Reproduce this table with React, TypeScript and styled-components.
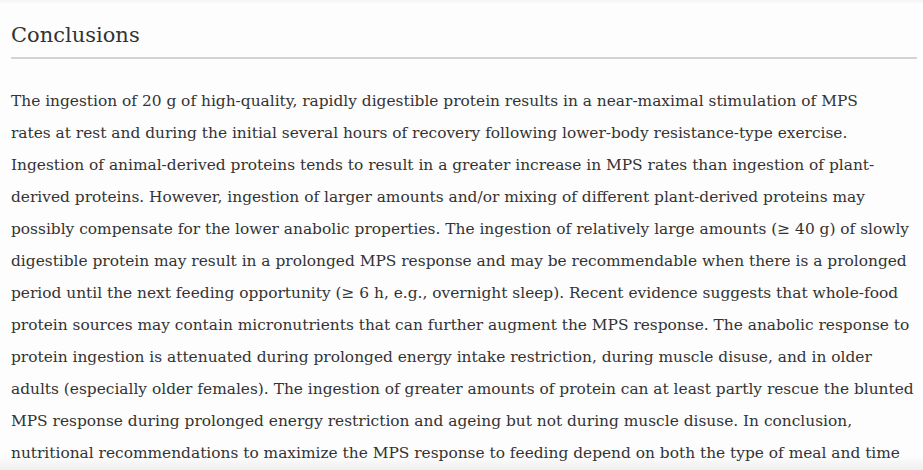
import React from "react";
import styled, { createGlobalStyle } from "styled-components";

const Global = createGlobalStyle`
  html, body { margin: 0; padding: 0; background: #fdfdfd; }
  body { font-family: "DejaVu Serif", Georgia, serif; color: #333; }
`;

const Page = styled.main`
  position: relative;
  height: 470px;
  overflow: hidden;
  padding: 0 6px 0 11px;
  box-sizing: border-box;
`;

const TopFade = styled.div`
  position: absolute;
  left: 0;
  right: 0;
  top: 0;
  height: 4px;
  background: linear-gradient(to bottom, rgba(0,0,0,0.035), rgba(0,0,0,0));
  pointer-events: none;
`;

const BottomFade = styled.div`
  position: absolute;
  left: 0;
  right: 0;
  bottom: 0;
  height: 14px;
  background: linear-gradient(to bottom, rgba(0,0,0,0), rgba(0,0,0,0.06));
  pointer-events: none;
`;

const Heading = styled.h2`
  margin: 0;
  padding-top: 20px;
  padding-bottom: 7px;
  font-family: "DejaVu Serif", Georgia, serif;
  font-weight: 400;
  font-size: 21px;
  line-height: 30px;
  color: #333;
  border-bottom: 2px solid #d3d3d3;
`;

const Para = styled.p`
  margin: 26px 0 0;
  font-family: "DejaVu Serif", Georgia, serif;
  font-size: 15.4px;
  line-height: 32px;
  color: #333;
  white-space: nowrap;
`;

const Line = styled.span`
  display: block;
`;

const lines = [
  "The ingestion of 20 g of high-quality, rapidly digestible protein results in a near-maximal stimulation of MPS",
  "rates at rest and during the initial several hours of recovery following lower-body resistance-type exercise.",
  "Ingestion of animal-derived proteins tends to result in a greater increase in MPS rates than ingestion of plant-",
  "derived proteins. However, ingestion of larger amounts and/or mixing of different plant-derived proteins may",
  "possibly compensate for the lower anabolic properties. The ingestion of relatively large amounts (≥ 40 g) of slowly",
  "digestible protein may result in a prolonged MPS response and may be recommendable when there is a prolonged",
  "period until the next feeding opportunity (≥ 6 h, e.g., overnight sleep). Recent evidence suggests that whole-food",
  "protein sources may contain micronutrients that can further augment the MPS response. The anabolic response to",
  "protein ingestion is attenuated during prolonged energy intake restriction, during muscle disuse, and in older",
  "adults (especially older females). The ingestion of greater amounts of protein can at least partly rescue the blunted",
  "MPS response during prolonged energy restriction and ageing but not during muscle disuse. In conclusion,",
  "nutritional recommendations to maximize the MPS response to feeding depend on both the type of meal and time",
];

export default function App() {
  return (
    <>
      <Global />
      <Page>
        <TopFade />
        <Heading>Conclusions</Heading>
        <Para>
          {lines.map((l, i) => (
            <Line key={i}>{l}</Line>
          ))}
        </Para>
        <BottomFade />
      </Page>
    </>
  );
}
